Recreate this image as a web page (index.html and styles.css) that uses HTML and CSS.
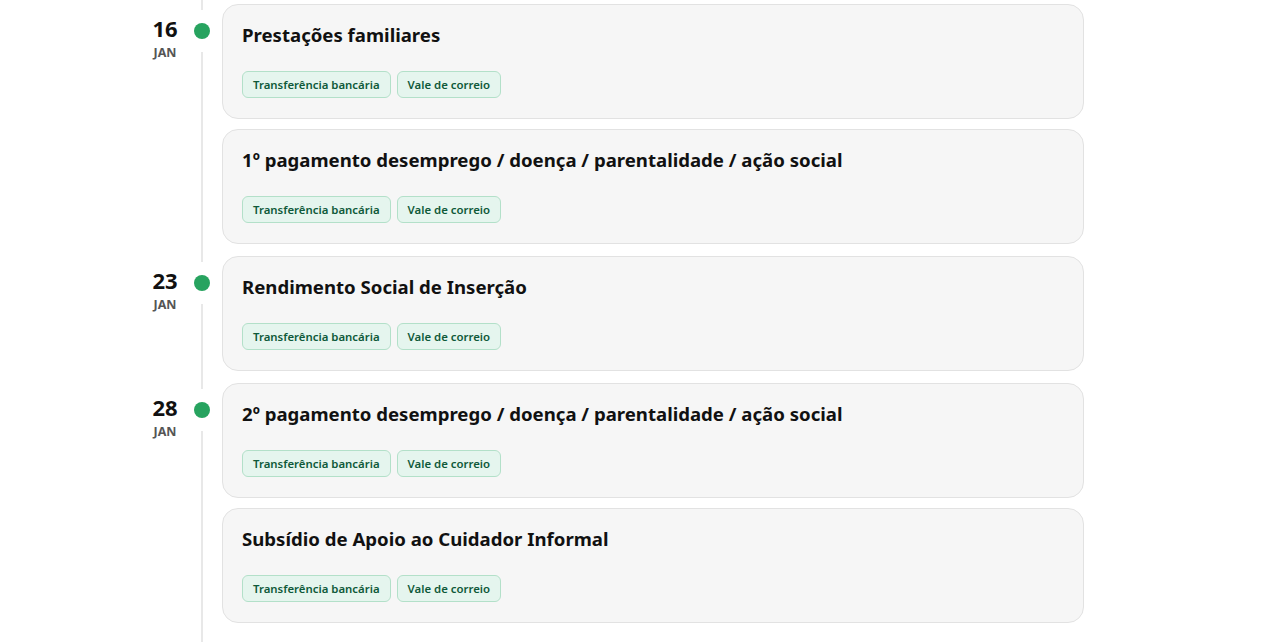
FILE: index.html
```html
<!DOCTYPE html>
<html lang="pt">
<head>
    <meta charset="UTF-8">
    <meta name="viewport" content="width=device-width, initial-scale=1.0">
    <title>Calendário de pagamentos</title>
    <link rel="stylesheet" href="styles.css">
</head>
<body>
    <div class="timeline">
        <div class="dia">
            <div class="data">
                <div class="numero">16</div>
                <div class="mes">JAN</div>
            </div>
            <div class="marcador"><span class="ponto"></span></div>
            <div class="pagamentos">
                <div class="cartao">
                    <h2>Prestações familiares</h2>
                    <div class="metodos">
                        <span class="metodo">Transferência bancária</span>
                        <span class="metodo">Vale de correio</span>
                    </div>
                </div>
                <div class="cartao">
                    <h2>1º pagamento desemprego / doença / parentalidade / ação social</h2>
                    <div class="metodos">
                        <span class="metodo">Transferência bancária</span>
                        <span class="metodo">Vale de correio</span>
                    </div>
                </div>
            </div>
        </div>

        <div class="dia">
            <div class="data">
                <div class="numero">23</div>
                <div class="mes">JAN</div>
            </div>
            <div class="marcador"><span class="ponto"></span></div>
            <div class="pagamentos">
                <div class="cartao">
                    <h2>Rendimento Social de Inserção</h2>
                    <div class="metodos">
                        <span class="metodo">Transferência bancária</span>
                        <span class="metodo">Vale de correio</span>
                    </div>
                </div>
            </div>
        </div>

        <div class="dia">
            <div class="data">
                <div class="numero">28</div>
                <div class="mes">JAN</div>
            </div>
            <div class="marcador"><span class="ponto"></span></div>
            <div class="pagamentos">
                <div class="cartao">
                    <h2>2º pagamento desemprego / doença / parentalidade / ação social</h2>
                    <div class="metodos">
                        <span class="metodo">Transferência bancária</span>
                        <span class="metodo">Vale de correio</span>
                    </div>
                </div>
                <div class="cartao">
                    <h2>Subsídio de Apoio ao Cuidador Informal</h2>
                    <div class="metodos">
                        <span class="metodo">Transferência bancária</span>
                        <span class="metodo">Vale de correio</span>
                    </div>
                </div>
            </div>
        </div>
    </div>
</body>
</html>
```

FILE: styles.css
```css
body {
    margin: 0;
    font-family: "Noto Sans", "Open Sans", sans-serif;
    color: #111;
    background: #fff;
}
.timeline {
    width: 936px;
    margin-left: 148px;
    padding: 4px 0 40px;
    display: flex;
    flex-direction: column;
    gap: 12px;
    background-image: linear-gradient(#e8e8e8, #e8e8e8);
    background-size: 2px 100%;
    background-position: 53px 0;
    background-repeat: no-repeat;
}
.dia {
    display: grid;
    grid-template-columns: 34px 40px 1fr;
}
.data {
    padding-top: 11px;
    text-align: center;
    font-weight: 700;
}
.numero {
    font-size: 22px;
    line-height: 26px;
}
.mes {
    margin-top: 4px;
    font-size: 12.5px;
    line-height: 15px;
    color: #555;
}
.marcador {
    display: flex;
    justify-content: center;
    padding-top: 19px;
}
.ponto {
    width: 16px;
    height: 16px;
    border-radius: 50%;
    background: #27a35f;
    box-shadow: 0 0 0 13px #fff;
}
.pagamentos {
    display: flex;
    flex-direction: column;
    gap: 10px;
}
.cartao {
    background: #f6f6f6;
    border: 1px solid #e2e2e2;
    border-radius: 16px;
    padding: 17px 20px 20px 19px;
}
.cartao h2 {
    margin: 0 0 24px;
    font-size: 18.6px;
    line-height: 25px;
    font-weight: 700;
}
.metodos {
    display: flex;
    gap: 6px;
}
.metodo {
    padding: 4px 10px;
    font-size: 11.4px;
    line-height: 17px;
    font-weight: 600;
    color: #0f5a3a;
    background: #e5f5ee;
    border: 1px solid #b3e0c9;
    border-radius: 6px;
}
```
